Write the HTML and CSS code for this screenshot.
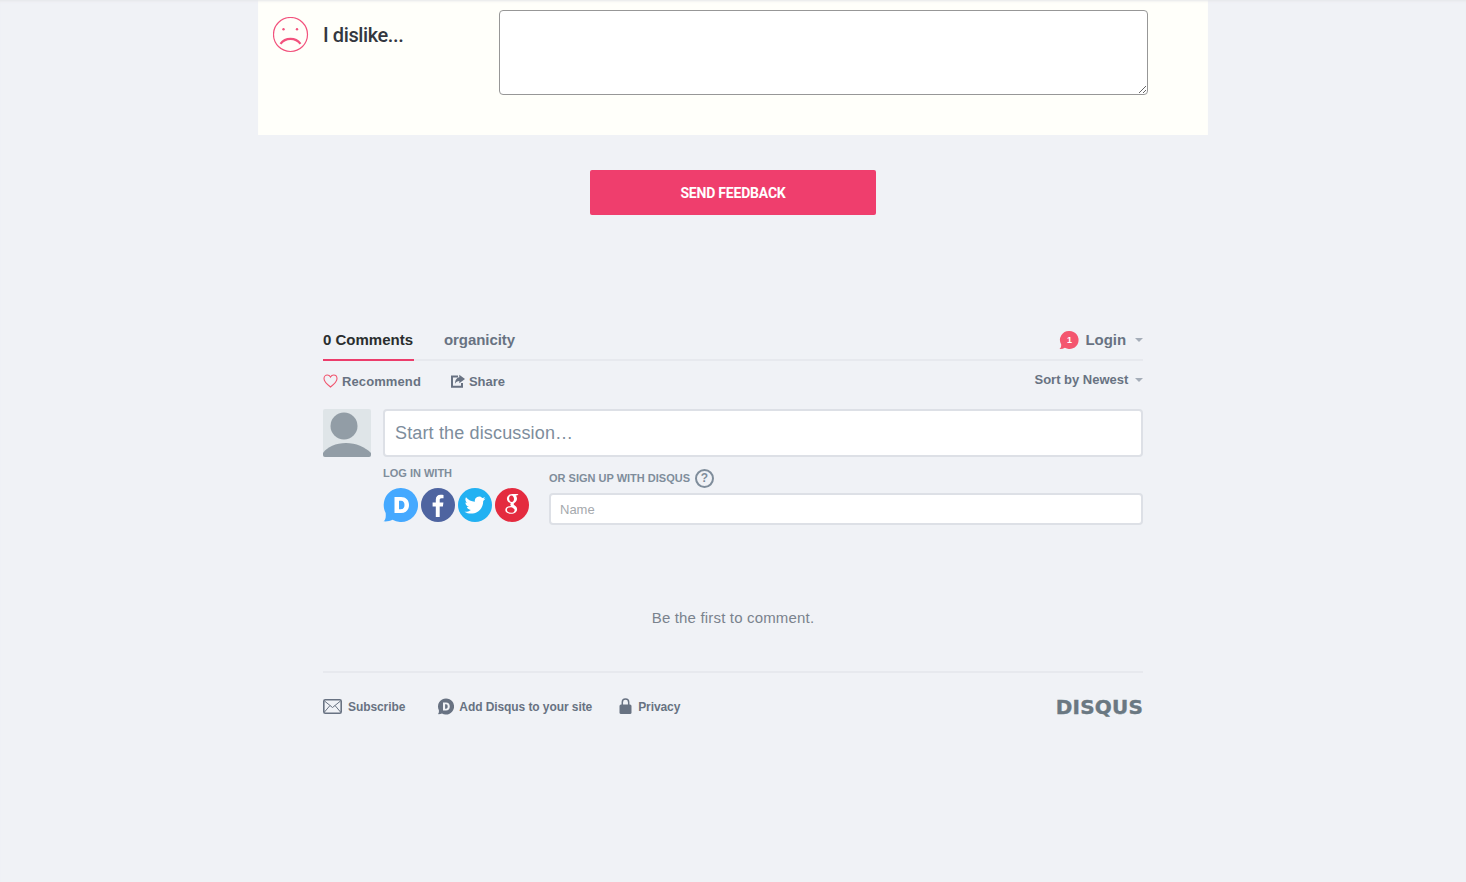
FILE: index.html
```html
<!DOCTYPE html>
<html lang="en">
<head>
  <meta charset="UTF-8" />
  <title>Feedback</title>
  <link rel="stylesheet" href="styles.css">
</head>
<body>
  <section class="card">
    <div class="card-label">
      <svg class="smiley" width="36" height="36" viewBox="0 0 36 36" fill="none" stroke="#f2527d">
        <circle cx="17.500" cy="17.500" r="17" stroke-width="1.200"/>
        <circle cx="10.500" cy="12.300" r="1.200" fill="#f2527d" stroke="none"/>
        <circle cx="24" cy="12.300" r="1.200" fill="#f2527d" stroke="none"/>
        <path d="M7.500 26.800c2.500-3.400 6-5 10-5s7.500 1.600 10 5" stroke-width="2.200"/>
      </svg>
      <span class="dislike">I dislike...</span>
    </div>
    <textarea class="card-input"></textarea>
  </section>

  <div class="send-row">
    <button class="send">SEND FEEDBACK</button>
  </div>

  <section class="disqus">
    <div class="tabs">
      <div class="tab active">0 Comments</div>
      <div class="tab org">organicity</div>
      <div class="login">
        <svg class="badge" width="20" height="20" viewBox="0 0 20 20">
          <path d="M10.500 1a9 9 0 1 1-4.600 16.700C4.200 18.700 2.400 19.200.500 19c1.200-.8 1.800-2.300 1.700-4.500A9 9 0 0 1 10.500 1z" fill="#f4566f"/>
          <text x="10.500" y="13" text-anchor="middle" class="badge-num">1</text>
        </svg>
        <span>Login</span>
        <span class="caret"></span>
      </div>
    </div>

    <div class="actions">
      <span class="action">
        <svg width="15" height="14" viewBox="0 0 15 14" fill="none" stroke="#f0566f" stroke-width="1.100">
          <path d="M7.500 13C3.500 9.800 1 7.500 1 4.700 1 2.600 2.500 1 4.300 1c1.300 0 2.500.7 3.200 2 .7-1.300 1.900-2 3.200-2C12.500 1 14 2.600 14 4.700c0 2.800-2.500 5.100-6.500 8.300z"/>
        </svg>
        Recommend
      </span>
      <span class="action share">
        <svg width="14" height="14" viewBox="0 0 14 14" fill="#687282">
          <path d="M0 1.500h7v2H2v8.300h8V9h2v4.800H0z"/>
          <path d="M8.300 .8l5.700 4.200-5.700 4.200V7C6.500 7 5 7.800 4 9.800 4 6 6 3.600 8.300 3.300z"/>
        </svg>
        Share
      </span>
      <span class="sort">Sort by Newest <span class="caret"></span></span>
    </div>

    <div class="compose">
      <svg class="avatar" width="48" height="48" viewBox="0 0 48 48">
        <rect width="48" height="48" rx="2" fill="#dfe5e8"/>
        <circle cx="21" cy="17" r="13.500" fill="#929da6"/>
        <path d="M0 46v-2C4 38 13 34 23 34s19 4 25 10v2a2 2 0 0 1-2 2H2a2 2 0 0 1-2-2z" fill="#929da6"/>
      </svg>
      <div class="compose-main">
        <div class="discussion">Start the discussion…</div>
        <div class="auth">
          <div class="login-with">
            <div class="auth-title">LOG IN WITH</div>
            <div class="socials">
              <svg width="35" height="34" viewBox="0 0 35 34">
                <path d="M18 0a17 17 0 1 1-8.500 31.700C7 33 3.500 33.700.500 33.300 2.500 32 3 29.500 2.700 25A17 17 0 0 1 18 0z" fill="#45a9ff"/>
                <path d="M11.500 9H18c5 0 8 3.200 8 8s-3 8-8 8h-6.500zm4.500 3.800v8.400h2c2.300 0 3.500-1.700 3.500-4.200s-1.200-4.200-3.500-4.200z" fill="#fff"/>
              </svg>
              <svg width="34" height="34" viewBox="0 0 34 34">
                <circle cx="17" cy="17" r="17" fill="#4e64a0"/>
                <path d="M18.700 29V18.500h3.200l.5-3.900h-3.700V12.200c0-1.100.3-1.900 1.800-1.900h2V6.900c-.4 0-1.500-.2-2.900-.2-2.900 0-4.800 1.800-4.800 5v2.900h-3.200v3.900h3.200V29z" fill="#fff"/>
              </svg>
              <svg width="34" height="34" viewBox="0 0 34 34">
                <circle cx="17" cy="17" r="17" fill="#22b1f2"/>
                <path d="M27.500 10.600c-.8.300-1.600.6-2.500.7.900-.5 1.600-1.400 1.900-2.400-.8.500-1.800.9-2.700 1a4.300 4.300 0 0 0-7.300 3.900C13.300 13.600 10.100 11.900 8 9.300c-.4.600-.6 1.400-.6 2.200 0 1.500.8 2.800 1.900 3.600-.7 0-1.400-.2-1.900-.5 0 2.100 1.500 3.800 3.400 4.200-.6.200-1.300.2-1.900.1.500 1.700 2.100 2.900 4 3-1.900 1.400-4.200 2-6.400 1.800 1.900 1.200 4.200 1.900 6.600 1.900 7.900 0 12.400-6.700 12.100-12.700.9-.6 1.700-1.400 2.300-2.300z" fill="#fff"/>
              </svg>
              <svg width="34" height="34" viewBox="0 0 34 34">
                <circle cx="17" cy="17" r="17" fill="#e42b3f"/>
                <path d="M23.500 6h-6.300c-3.200 0-5.300 2.200-5.300 4.800 0 2.200 1.600 3.900 3.900 4.100-.3.400-.5.900-.5 1.400 0 .7.300 1.100.7 1.600-3.300.1-5.700 1.800-5.700 4 0 2.300 2.600 3.800 5.800 3.800 3.700 0 6-2.100 6-4.300 0-1.800-1-2.800-2.300-3.800-.7-.6-1.200-1-1.200-1.500s.4-.9 1-1.400c1.400-1.100 2.400-2.200 2.400-4 0-1.300-.6-2.400-1.400-3.100h1.500zM16.800 14c-1.600 0-2.700-1.800-2.700-3.600 0-1.500.8-2.900 2.200-2.900 1.700 0 2.700 1.900 2.700 3.600 0 1.500-.7 2.900-2.200 2.900zm-.5 5.200c2 .6 3.300 1.600 3.300 3 0 1.600-1.400 2.600-3.500 2.600-2.400 0-4.200-1.300-4.200-3.100 0-1.500 1.800-2.600 4.400-2.500z" fill="#fff"/>
              </svg>
            </div>
          </div>
          <div class="signup">
            <div class="auth-title signup-title">OR SIGN UP WITH DISQUS <span class="help">?</span></div>
            <div class="name-field">Name</div>
          </div>
        </div>
      </div>
    </div>

    <p class="empty">Be the first to comment.</p>

    <div class="footer">
      <span class="foot-link subscribe">
        <svg width="19" height="15" viewBox="0 0 19 15" fill="none" stroke="#687282">
          <rect x="0.800" y="0.800" width="17.400" height="13.400" rx="1.500" stroke-width="1.600"/>
          <path d="M1.500 2l8 6.500 8-6.500M1.500 13l5.500-6.500M17.500 13L12 6.500" stroke-width="1"/>
        </svg>
        Subscribe
      </span>
      <span class="foot-link add">
        <svg width="17" height="17" viewBox="0 0 17 17">
          <path d="M9 .5a8 8 0 1 1-4 14.900c-1.200.6-2.800.9-4.300.7 1-.6 1.300-1.800 1.200-3.900A8 8 0 0 1 9 .5z" fill="#687282"/>
          <path d="M6 4.500h3c2.400 0 3.800 1.500 3.800 4s-1.400 4-3.800 4H6zm2.100 1.800v4.400h.9c1.100 0 1.700-.9 1.700-2.200s-.6-2.200-1.700-2.200z" fill="#f0f2f6"/>
        </svg>
        Add Disqus to your site
      </span>
      <span class="foot-link privacy">
        <svg width="13" height="16" viewBox="0 0 13 16">
          <path d="M3.300 7V4.200a3.200 3.200 0 0 1 6.400 0V7" fill="none" stroke="#687282" stroke-width="1.500"/>
          <rect x="0.500" y="6.500" width="12" height="9.500" rx="1.500" fill="#687282"/>
        </svg>
        Privacy
      </span>
      <span class="wordmark">DISQUS</span>
    </div>
  </section>
</body>
</html>
```

FILE: styles.css
```css
html, body { margin: 0; padding: 0; }
body {
  background: #f0f2f6;
  font-family: "Liberation Sans", Arial, sans-serif;
  height: 882px;
  overflow: hidden;
  box-shadow: inset 0 3px 3px -2px #e4e5e8;
}

.card {
  width: 950px;
  height: 135px;
  margin: 0 auto;
  background: #fffffa;
  box-shadow: inset 0 3px 3px -2px #e4e5e8;
  display: flex;
  box-sizing: border-box;
  padding: 10px 60px 0 15px;
}
.card-label { width: 226px; display: flex; align-items: flex-start; padding-top: 7px; }
.smiley { margin-right: 14px; }
.dislike {
  font-family: Roboto, sans-serif;
  font-size: 20px;
  font-weight: 500;
  line-height: 36px;
  color: #33373f;
  letter-spacing: -0.4px;
}
.card-input {
  width: 649px;
  height: 85px;
  box-sizing: border-box;
  background: #fff;
  border: 1px solid #979797;
  border-radius: 4px;
  margin: 0;
  padding: 0;
}

.send-row { display: flex; justify-content: center; padding-top: 35px; }
.send {
  width: 286px;
  height: 45px;
  border: 0;
  border-radius: 2px;
  background: #ef3e6d;
  color: #fff;
  font-family: Roboto, sans-serif;
  font-size: 14px;
  font-weight: 700;
  letter-spacing: -0.2px;
  padding: 0;
}

.disqus { width: 820px; margin: 0 auto; padding-top: 110px; color: #687282; }

.tabs {
  display: flex;
  align-items: flex-start;
  height: 36px;
  box-sizing: border-box;
  border-bottom: 2px solid #e7e9ee;
  font-size: 15px;
  font-weight: 700;
}
.tab { height: 36px; box-sizing: border-box; line-height: 30px; padding-right: 1px; margin-right: 29px; }
.tab.active { color: #2a2e2e; border-bottom: 2px solid #ec3d6b; margin-right: 30px; }
.tab.org { letter-spacing: -0.08px; }
.login { margin-left: auto; display: flex; align-items: center; height: 29px; letter-spacing: -0.05px; }
.login .caret { margin-left: 9px; }
.badge { margin-right: 6px; margin-top: 1px; }
.badge-num { font-size: 9px; font-weight: 700; fill: #fff; }
.caret {
  display: inline-block;
  width: 0;
  height: 0;
  border: 4px solid transparent;
  border-top-color: #a5adb8;
  border-bottom: 0;
  margin-left: 10px;
  vertical-align: 2px;
}

.actions {
  display: flex;
  height: 48px;
  font-size: 13px;
  font-weight: 700;
  padding-top: 10px;
  box-sizing: border-box;
}
.action { display: flex; align-items: center; height: 20px; letter-spacing: 0.1px; }
.action svg { margin-right: 4px; }
.share { margin-left: 30px; letter-spacing: 0; }
.sort { margin-left: auto; margin-top: 1px; line-height: 16px; height: 16px; }
.sort .caret { margin-left: 3px; }

.compose { display: flex; }
.avatar { margin-right: 12px; flex: none; }
.compose-main { flex: 1; }
.discussion {
  height: 48px;
  box-sizing: border-box;
  background: #fff;
  border: 2px solid #dde0e6;
  border-radius: 4px;
  font-size: 18px;
  line-height: 44px;
  padding-left: 10px;
  color: #7d8d9c;
  letter-spacing: 0.15px;
}
.auth { display: flex; margin-top: 9px; }
.login-with { width: 166px; }
.auth-title { font-size: 11px; font-weight: 700; color: #7f8d9b; line-height: 14px; }
.socials { display: flex; gap: 3px; margin-top: 8px; }
.signup { flex: 1; padding-top: 2px; }
.signup-title { display: flex; align-items: center; gap: 5px; height: 20px; }
.help {
  width: 15px;
  height: 15px;
  border: 2px solid #7f8d9b;
  border-radius: 50%;
  font-size: 12px;
  line-height: 15px;
  text-align: center;
}
.name-field {
  height: 32px;
  box-sizing: border-box;
  margin-top: 5px;
  background: #fff;
  border: 2px solid #dde0e6;
  border-radius: 4px;
  font-size: 13px;
  line-height: 30px;
  padding-left: 9px;
  color: #a5a9ad;
}

.empty {
  margin: 0;
  padding-top: 84px;
  height: 62px;
  text-align: center;
  font-size: 15px;
  line-height: 18px;
  letter-spacing: 0.17px;
  color: #7a828d;
}

.footer {
  display: flex;
  align-items: center;
  height: 68px;
  border-top: 2px solid #e7e9ee;
  font-size: 12px;
  font-weight: 700;
  letter-spacing: -0.08px;
}
.foot-link { display: flex; align-items: center; }
.foot-link svg { margin-bottom: 2px; }
.subscribe svg { margin-right: 6px; }
.add { margin-left: 33px; }
.add svg { margin-right: 5px; margin-left: -1px; }
.privacy { margin-left: 27px; }
.privacy svg { margin-right: 6px; }
.wordmark {
  margin-left: auto;
  font-family: "DejaVu Sans", sans-serif;
  font-size: 20px;
  font-weight: 700;
  color: #6a7882;
  letter-spacing: 0.2px;
  -webkit-text-stroke: 0.4px #6a7882;
}
```
